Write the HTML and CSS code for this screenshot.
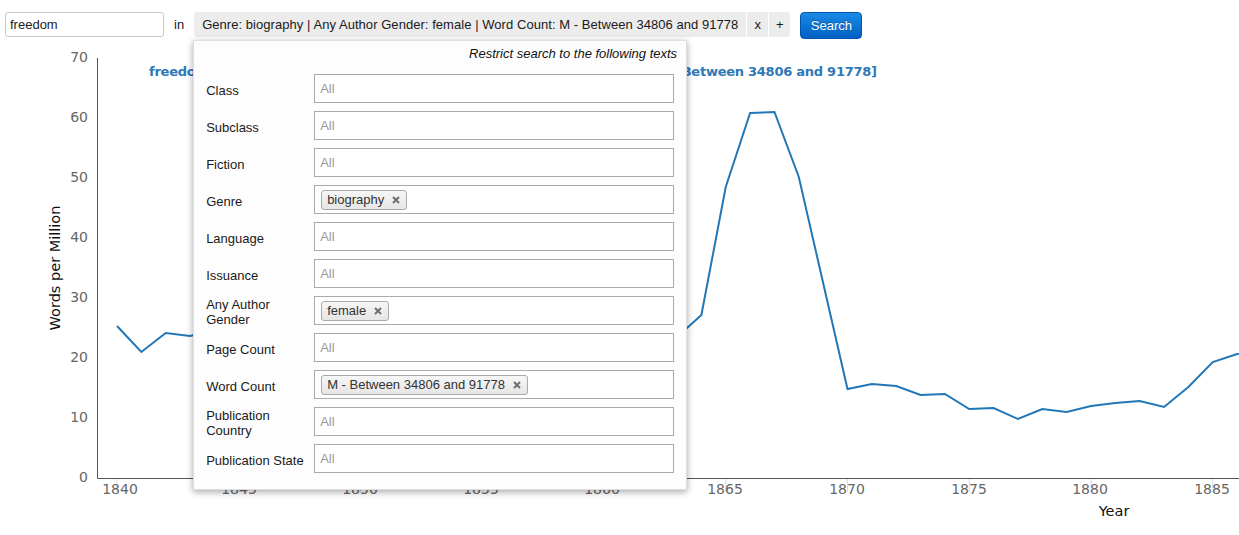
FILE: index.html
```html
<!DOCTYPE html>
<html>
<head>
<meta charset="utf-8">
<title>Search</title>
<link rel="stylesheet" href="styles.css">
</head>
<body>
<div class="toolbar">
  <input class="term" type="text" value="freedom">
  <span class="in">in</span>
  <div class="query-wrap">
    <div class="query">
      <span class="query-text">Genre: biography <span class="sep">|</span> Any Author Gender: female <span class="sep">|</span> Word Count: M - Between 34806 and 91778</span>
      <span class="query-btn">x</span>
      <span class="query-btn">+</span>
    </div>
    <div class="panel">
      <div class="panel-head">Restrict search to the following texts</div>
      <div class="fields">
        <div class="label">Class</div><div class="field"><span class="ph">All</span></div>
        <div class="label">Subclass</div><div class="field"><span class="ph">All</span></div>
        <div class="label">Fiction</div><div class="field"><span class="ph">All</span></div>
        <div class="label">Genre</div><div class="field"><span class="chip">biography<svg class="chip-x" width="8" height="8" viewBox="0 0 8 8"><path d="M1 1L7 7M7 1L1 7"/></svg></span></div>
        <div class="label">Language</div><div class="field"><span class="ph">All</span></div>
        <div class="label">Issuance</div><div class="field"><span class="ph">All</span></div>
        <div class="label">Any Author Gender</div><div class="field"><span class="chip">female<svg class="chip-x" width="8" height="8" viewBox="0 0 8 8"><path d="M1 1L7 7M7 1L1 7"/></svg></span></div>
        <div class="label">Page Count</div><div class="field"><span class="ph">All</span></div>
        <div class="label">Word Count</div><div class="field"><span class="chip">M - Between 34806 and 91778<svg class="chip-x" width="8" height="8" viewBox="0 0 8 8"><path d="M1 1L7 7M7 1L1 7"/></svg></span></div>
        <div class="label">Publication Country</div><div class="field"><span class="ph">All</span></div>
        <div class="label">Publication State</div><div class="field"><span class="ph">All</span></div>
      </div>
    </div>
  </div>
  <button class="search">Search</button>
</div>

<svg class="chart" width="1239" height="495" viewBox="0 40 1239 495" xmlns="http://www.w3.org/2000/svg">
  <text class="title" x="149" y="76" textLength="728" lengthAdjust="spacing">freedom [Genre: biography | Any Author Gender: female | Word Count: M - Between 34806 and 91778]</text>

  <g class="yticks">
    <text x="88" y="62">70</text>
    <text x="88" y="122">60</text>
    <text x="88" y="182">50</text>
    <text x="88" y="242">40</text>
    <text x="88" y="302">30</text>
    <text x="88" y="362">20</text>
    <text x="88" y="422">10</text>
    <text x="88" y="482">0</text>
  </g>

  <g class="xgrid">
    <line x1="117" y1="479" x2="117" y2="492"/>
    <line x1="238.75" y1="479" x2="238.75" y2="492"/>
    <line x1="360.5" y1="479" x2="360.5" y2="492"/>
    <line x1="482.25" y1="479" x2="482.25" y2="492"/>
    <line x1="604" y1="479" x2="604" y2="492"/>
    <line x1="725.75" y1="479" x2="725.75" y2="492"/>
    <line x1="847.5" y1="479" x2="847.5" y2="492"/>
    <line x1="969.25" y1="479" x2="969.25" y2="492"/>
    <line x1="1091" y1="479" x2="1091" y2="492"/>
    <line x1="1212.75" y1="479" x2="1212.75" y2="492"/>
  </g>

  <g class="xticks">
    <text x="120" y="494">1840</text>
    <text x="239" y="494">1845</text>
    <text x="360" y="494">1850</text>
    <text x="481" y="494">1855</text>
    <text x="602" y="494">1860</text>
    <text x="725" y="494">1865</text>
    <text x="847" y="494">1870</text>
    <text x="969" y="494">1875</text>
    <text x="1090" y="494">1880</text>
    <text x="1212" y="494">1885</text>
  </g>

  <text class="axis-title" x="1114" y="516">Year</text>
  <text class="axis-title" transform="translate(60 268) rotate(-90)" x="0" y="0">Words per Million</text>

  <path class="axis" d="M97.5 58 V478.5 H1239"/>

  <polyline class="series" points="117,326 141.35,352 165.7,333 190.05,336 214.4,330 238.75,328 263.1,320 287.45,325 311.8,335 336.15,330 360.5,322 384.85,318 409.2,326 433.55,332 457.9,340 482.25,336 506.6,328 530.95,330 555.3,345 579.65,338 604,320 628.35,310 652.7,325 677.05,337 701.4,315 725.75,187 750.1,113 774.45,112 798.8,177 823.15,283 847.5,389 871.85,384 896.2,386 920.55,395 944.9,394 969.25,409 993.6,408 1017.95,419 1042.3,409 1066.65,412 1091,406 1115.35,403 1139.7,401 1164.05,407 1188.4,387 1212.75,362 1237.1,354 1261.45,350"/>
</svg>
</body>
</html>
```

FILE: styles.css
```css
html, body {
  margin: 0;
  padding: 0;
  background: #fff;
}

body {
  width: 1239px;
  height: 535px;
  overflow: hidden;
  font-family: "Liberation Sans", Arial, sans-serif;
  color: #222;
  position: relative;
}

.toolbar {
  display: flex;
  align-items: flex-start;
  padding: 12px 0 0 5px;
  height: 28px;
  position: relative;
  z-index: 2;
}

.term {
  box-sizing: border-box;
  width: 159px;
  height: 25px;
  margin: 0;
  padding: 0 4px;
  border: 1px solid #c9c9c9;
  border-radius: 3px;
  font-family: "Liberation Sans", Arial, sans-serif;
  font-size: 13px;
  color: #222;
  background: #fff;
  outline: none;
}

.in {
  margin-left: 10px;
  line-height: 25px;
  font-size: 13px;
  color: #222;
}

.query-wrap {
  position: relative;
  margin-left: 10px;
}

.query {
  display: flex;
  height: 25px;
  font-size: 13px;
  line-height: 25px;
  color: #1a1a1a;
}

.query-text {
  background: #ececec;
  padding: 0 8px;
  border-radius: 3px 0 0 3px;
  white-space: nowrap;
  letter-spacing: 0.05px;
}

.sep {
  color: #3a1430;
}

.query-btn {
  width: 21px;
  margin-left: 1px;
  text-align: center;
  background: #ececec;
}

.query-btn:last-child {
  border-radius: 0 3px 3px 0;
}

.search {
  box-sizing: border-box;
  margin: 0 0 0 10px;
  width: 62px;
  height: 27px;
  padding: 0;
  border: 1px solid #0057b0;
  border-radius: 4px;
  background: linear-gradient(#1a8ae6, #0060c2);
  color: #fff;
  font-family: "Liberation Sans", Arial, sans-serif;
  font-size: 13px;
  text-shadow: 0 -1px 0 rgba(0, 0, 0, 0.25);
}

.panel {
  position: absolute;
  top: 28px;
  left: -1px;
  box-sizing: border-box;
  width: 494px;
  height: 450px;
  background: #fdfdfd;
  border: 1px solid rgba(0, 0, 0, 0.12);
  box-shadow: 0 2px 7px rgba(0, 0, 0, 0.35);
  padding: 5px 12px 0 12px;
}

.panel-head {
  text-align: right;
  font-style: italic;
  font-size: 13px;
  line-height: 16px;
  color: #111;
  margin-right: -3px;
}

.fields {
  display: grid;
  grid-template-columns: 100px 360px;
  grid-auto-rows: 29px;
  column-gap: 8px;
  row-gap: 8px;
  margin-top: 12px;
}

.label {
  align-self: center;
  font-size: 13px;
  line-height: 15px;
  color: #1a1a1a;
  padding-top: 3px;
}

.field {
  box-sizing: border-box;
  height: 29px;
  border: 1px solid #aaa;
  background: #fff;
  padding: 0 5px;
  display: flex;
  align-items: center;
}

.ph {
  font-size: 13px;
  color: #999;
}

.chip {
  display: inline-flex;
  align-items: center;
  height: 20px;
  box-sizing: border-box;
  margin-left: 1px;
  padding: 0 5px;
  border: 1px solid #aaa;
  border-radius: 3px;
  background: linear-gradient(#f6f6f6, #e6e6e6);
  font-size: 13px;
  color: #333;
  white-space: nowrap;
}

.chip-x {
  margin-left: 8px;
  margin-right: 1px;
  fill: none;
  stroke: #6f6f6f;
  stroke-width: 2;
}

.chart {
  display: block;
  position: relative;
  z-index: 1;
}

.title {
  font-family: "DejaVu Sans", sans-serif;
  font-weight: bold;
  font-size: 13px;
  fill: #2f78b8;
}

.yticks text {
  font-family: "DejaVu Sans", sans-serif;
  font-size: 14px;
  fill: #666;
  text-anchor: end;
}

.xticks text {
  font-family: "DejaVu Sans", sans-serif;
  font-size: 14px;
  fill: #666;
  text-anchor: middle;
}

.xgrid line {
  stroke: #d5dde6;
  stroke-width: 1;
}

.axis-title {
  font-family: "DejaVu Sans", sans-serif;
  font-size: 14.5px;
  fill: #111;
  text-anchor: middle;
}

.axis {
  fill: none;
  stroke: #555;
  stroke-width: 1;
}

.series {
  fill: none;
  stroke: #2277b6;
  stroke-width: 2;
}
```
